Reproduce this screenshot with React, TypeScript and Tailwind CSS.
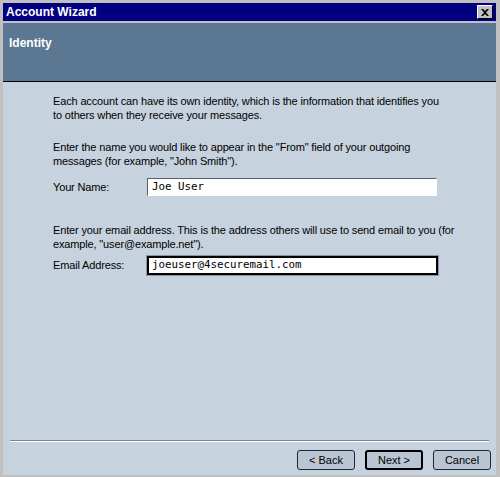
import React from "react";

function Field({ label, value, focused }: { label: string; value: string; focused?: boolean }) {
  return (
    <div className="flex items-center h-[18px]">
      <span className="w-[94px]">{label}</span>
      <div
        className={
          focused
            ? "w-[291px] h-[19px] border-2 border-black bg-white flex items-center px-[3px]"
            : "w-[290px] h-[18px] border border-t-[#5a5e66] border-l-[#5a5e66] border-r-white border-b-white bg-white flex items-center px-[4px]"
        }
        style={{ boxShadow: focused ? "0 0 0 1px #8a96a2" : undefined }}
      >
        <span className="font-['DejaVu_Sans_Mono',monospace] text-[10.8px] tracking-[0px] text-black">{value}</span>
      </div>
    </div>
  );
}

function Btn({ children, primary }: { children: React.ReactNode; primary?: boolean }) {
  return (
    <button
      className={
        "w-[58px] h-[20px] rounded-[3px] bg-[#b9c5d2] text-black text-[11px] tracking-normal flex items-center justify-center " +
        (primary ? "border-2 border-black" : "border border-[#202830]")
      }
    >
      {children}
    </button>
  );
}

export default function App() {
  return (
    <div className="w-[500px] h-[477px] bg-[#c0c0c0] pt-[3px] pl-[3px] pr-[4px] pb-[2px] flex flex-col font-['Liberation_Sans',Arial,sans-serif] text-black">
      {/* Title bar */}
      <div className="h-[18px] bg-[#000080] flex items-center justify-between pl-[3px] pr-[3px]">
        <span className="text-white font-bold text-[12px]">Account Wizard</span>
        <div className="w-[16px] h-[14px] bg-[#c0c0c0] border border-t-white border-l-white border-r-black border-b-black flex items-center justify-center">
          <svg width="8" height="7" viewBox="0 0 8 7">
            <path d="M0 0h2l2 2 2-2h2L5 3.5 8 7H6L4 5 2 7H0l3-3.5z" fill="black" />
          </svg>
        </div>
      </div>

      {/* Header */}
      <div className="mt-[2px] h-[59px] bg-[#5b7792] border-b border-black px-[6px] pt-[7px]">
        <span className="text-white font-bold text-[12px]">Identity</span>
      </div>

      {/* Content */}
      <div className="flex-1 bg-[#c6d2de] flex flex-col text-[11px] leading-[14px] tracking-[-0.15px]">
        <div className="flex-1 pl-[50px] pr-[10px] pt-[12px] flex flex-col">
          <p>
            Each account can have its own identity, which is the information that identifies you
            <br />
            to others when they receive your messages.
          </p>
          <p className="mt-[18px]">
            Enter the name you would like to appear in the "From" field of your outgoing
            <br />
            messages (for example, "John Smith").
          </p>
          <div className="mt-[10px]">
            <Field label="Your Name:" value="Joe User" />
          </div>
          <p className="mt-[27px]">
            Enter your email address. This is the address others will use to send email to you (for
            <br />
            example, "user@example.net").
          </p>
          <div className="mt-[5px]">
            <Field label="Email Address:" value="joeuser@4securemail.com" focused />
          </div>
        </div>

        {/* Footer */}
        <div className="mx-[7px] border-t border-t-[#7a8591] border-b border-b-white" />
        <div className="h-[33px] flex items-center justify-end gap-[10px] pr-[5px] pt-[2px]">
          <Btn>&lt; Back</Btn>
          <Btn primary>Next &gt;</Btn>
          <Btn>Cancel</Btn>
        </div>
      </div>
    </div>
  );
}
